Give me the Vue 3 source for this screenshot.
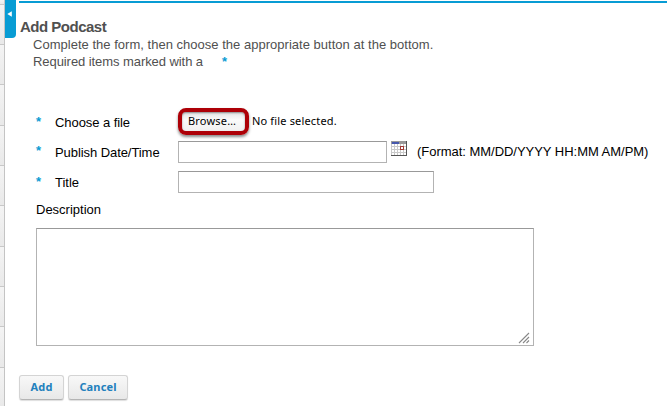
<script setup>
import { ref } from 'vue'

const railRows = [5, 40, 40, 41, 40, 40, 41, 40, 40, 41, 40]
const publishDate = ref('')
const title = ref('')
const description = ref('')
</script>

<template>
  <div class="page">
    <aside class="rail">
      <div v-for="(h, i) in railRows" :key="i" class="rail-row" :style="{ height: h + 'px' }"></div>
    </aside>
    <button class="toggle" type="button" aria-label="Collapse">
      <svg width="5" height="6" viewBox="0 0 5 6"><path d="M4.8 0.3V5.7L0.3 3Z" fill="#fff" /></svg>
    </button>
    <main class="content">
      <h1>Add Podcast</h1>
      <div class="intro">
        <p class="instruction">Complete the form, then choose the appropriate button at the bottom.</p>
        <p class="required">Required items marked with a<span class="star">*</span></p>
      </div>

      <form @submit.prevent>
        <div class="row">
          <span class="star">*</span>
          <span class="label choose">Choose a file</span>
          <button class="browse" type="button">Browse…</button>
          <span class="status">No file selected.</span>
        </div>
        <div class="row">
          <span class="star">*</span>
          <label class="label publish" for="date">Publish Date/Time</label>
          <input id="date" v-model="publishDate" class="date" type="text" />
          <svg class="calendar" width="16" height="15" viewBox="0 0 16 15" shape-rendering="crispEdges">
            <rect width="16" height="15" fill="#c9c9c9" />
            <rect width="16" height="3" fill="#999" />
            <rect x="1" y="1" width="7" height="2" fill="#4658ad" />
            <g fill="#fff">
              <template v-for="r in 4" :key="r">
                <rect v-for="c in 5" :key="c" :x="c * 3 - 2" :y="r * 3" width="2" height="2" />
              </template>
            </g>
            <path d="M15.5 0V14.5H0" fill="none" stroke="#555" />
            <rect x="9.5" y="5.5" width="3" height="3" fill="#fff" stroke="#a33b35" />
          </svg>
          <span class="format">(Format: MM/DD/YYYY HH:MM AM/PM)</span>
        </div>
        <div class="row">
          <span class="star">*</span>
          <label class="label title-label" for="title">Title</label>
          <input id="title" v-model="title" class="title" type="text" />
        </div>
        <label class="description" for="description">Description</label>
        <div class="area">
          <textarea id="description" v-model="description"></textarea>
          <svg class="grip" width="12" height="12" viewBox="0 0 12 12">
            <path d="M1 11L11 1M5 11L11 5M8.5 11L11 8.5" fill="none" stroke="#888" stroke-width="1.1" />
          </svg>
        </div>
        <div class="actions">
          <button class="action add" type="submit">Add</button>
          <button class="action cancel" type="button">Cancel</button>
        </div>
      </form>
    </main>
  </div>
</template>

<style>
body {
  margin: 0;
  background: #fff;
}
</style>

<style scoped>
.page {
  display: flex;
  width: 667px;
  height: 406px;
  overflow: hidden;
  font: 13px/17px "Liberation Sans", Arial, sans-serif;
  color: #000;
}
.page * {
  box-sizing: border-box;
}
.rail {
  flex: none;
  width: 5px;
  border-right: 1px solid #c4c4c4;
}
.rail-row {
  border-bottom: 1px solid #c8c8c8;
  background: linear-gradient(#f4f4f4, #e9e9e9);
}
.toggle {
  flex: none;
  width: 11px;
  height: 38px;
  margin: 0 3px 0 0;
  padding: 0 2px 10px 0;
  border: 0;
  border-radius: 0 0 4px 0;
  background: #089cd4;
  display: flex;
  align-items: center;
  justify-content: center;
}
.content {
  flex: 1;
  margin-top: 1px;
  border-top: 2px solid #089cd4;
  white-space: nowrap;
}
h1 {
  margin: 15px 0 0 1px;
  font-size: 15px;
  line-height: 18px;
  letter-spacing: -0.5px;
  color: #505050;
}
.intro {
  padding-left: 14px;
  color: #505050;
}
p {
  margin: 0;
}
.instruction {
  letter-spacing: 0.02px;
}
.required {
  letter-spacing: -0.07px;
}
.star {
  color: #0a9bd3;
  font-weight: bold;
}
.required .star {
  margin-left: 19px;
}
form {
  margin-top: 37px;
}
.row {
  display: flex;
  align-items: center;
  height: 30px;
  padding-left: 17px;
}
.row > .star {
  width: 19px;
  margin-top: -2px;
}
.row:nth-child(2) > .star {
  margin-top: -4px;
}
.label {
  width: 123px;
}
.choose,
.publish {
  letter-spacing: -0.07px;
}
.browse {
  width: 71px;
  height: 27px;
  margin-top: -2px;
  padding: 0 3px 1px 0;
  border: 4px solid #ad0007;
  border-radius: 8px;
  background: linear-gradient(#e4e4e4, #fafafa 40%, #f1f1f1);
  box-shadow: 0 2px 3px #0007, inset 0 1px 2px #0006;
  color: #000;
  font: 11px/16px "Noto Sans", sans-serif;
  letter-spacing: 0.2px;
}
.status {
  margin: -2px 0 0 3px;
  font: 11px/16px "Noto Sans", sans-serif;
  letter-spacing: 0.16px;
}
input,
textarea {
  border: 1px solid #b3b3b3;
  border-top-color: #999;
  border-radius: 0;
  background: #fff;
  outline: 0;
}
input {
  height: 22px;
  padding: 2px;
}
.date {
  width: 209px;
}
.title {
  width: 256px;
}
.calendar {
  margin: -8px 10px 0 4px;
}
.format {
  margin-top: -2px;
  letter-spacing: -0.03px;
}
.description {
  display: block;
  margin: 4px 0 0 17px;
}
.area {
  position: relative;
  width: 498px;
  height: 118px;
  margin: 10px 0 0 17px;
}
textarea {
  display: block;
  width: 100%;
  height: 100%;
  resize: none;
}
.grip {
  position: absolute;
  right: 4px;
  bottom: 2px;
}
.actions {
  display: flex;
  gap: 4px;
  margin-top: 29px;
}
.action {
  height: 25px;
  padding: 0 0 1px;
  border: 1px solid #d4d4d4;
  border-bottom-color: #b4b4b4;
  border-radius: 3px;
  background: linear-gradient(#f8f8f8, #e8e8e8);
  box-shadow: 0 1px 1px #0002;
  color: #2280bd;
  font: bold 11px/16px "Noto Sans", sans-serif;
  letter-spacing: 0.15px;
}
.add {
  width: 45px;
}
.cancel {
  width: 60px;
}
</style>
